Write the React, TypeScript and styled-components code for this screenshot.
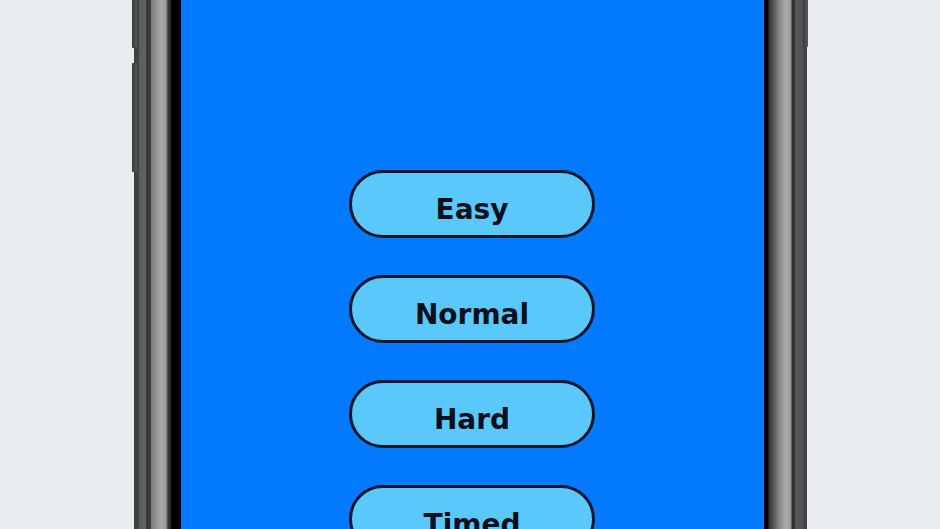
import React from "react";
import styled, { createGlobalStyle } from "styled-components";

const GlobalStyle = createGlobalStyle`
  html, body {
    margin: 0;
    padding: 0;
    background: #e9edf0;
    overflow: hidden;
  }
`;

const Page = styled.div`
  height: 529px;
  display: flex;
  justify-content: center;
  overflow: hidden;
`;

const Phone = styled.div`
  position: relative;
  width: 673px;
  height: 529px;
  box-sizing: border-box;
  padding: 0 43px 0 47px;
  display: flex;
  background:
    linear-gradient(
        to right,
        #3e3e40 0px,
        #444446 5px,
        #5c5c5e 5px,
        #626264 12px,
        #38383a 12px,
        #3a3a3c 17px,
        #7a7a7c 17px,
        #a9a9ab 27px,
        #9a9a9c 32px,
        #3a3a3c 34px,
        #2a2a2c 37px,
        #000 37px,
        #000 47px
      )
      left top / 47px 100% no-repeat,
    linear-gradient(
        to right,
        #000 0px,
        #050505 4px,
        #343436 5px,
        #8a8a8c 16px,
        #adadaf 22px,
        #979799 27px,
        #2f2f31 28px,
        #333335 31px,
        #58585a 31px,
        #505052 39px,
        #404042 40px,
        #444446 43px
      )
      right top / 43px 100% no-repeat;
`;

const SideButton = styled.div<{ $side: "left" | "right"; $top: number; $height: number }>`
  position: absolute;
  ${(p) => (p.$side === "left" ? "left: -2px;" : "right: -1px;")}
  top: ${(p) => p.$top}px;
  width: 5px;
  height: ${(p) => p.$height}px;
  background: linear-gradient(to right, #3a3a3c, #58585a);
  border-radius: 1px;
`;

const Screen = styled.div`
  flex: 1;
  background: #037aff;
  display: flex;
  flex-direction: column;
  align-items: center;
  gap: 37px;
  padding-top: 170px;
  overflow: hidden;
`;

const ModeButton = styled.button`
  flex-shrink: 0;
  width: 246px;
  height: 68px;
  box-sizing: border-box;
  border: 3px solid #0b1627;
  border-radius: 34px;
  background: #5ac8fa;
  color: #0a0f1a;
  font-family: "Comic Sans MS", "DejaVu Sans", sans-serif;
  font-weight: 700;
  font-size: 28px;
  padding: 10px 0 0;
  cursor: pointer;
`;

const modes = ["Easy", "Normal", "Hard", "Timed"];

export default function App() {
  return (
    <>
      <GlobalStyle />
      <Page>
        <Phone>
          <SideButton $side="left" $top={-10} $height={58} />
          <SideButton $side="left" $top={63} $height={109} />
          <SideButton $side="right" $top={-10} $height={57} />
          <Screen>
            {modes.map((m) => (
              <ModeButton key={m}>{m}</ModeButton>
            ))}
          </Screen>
        </Phone>
      </Page>
    </>
  );
}
